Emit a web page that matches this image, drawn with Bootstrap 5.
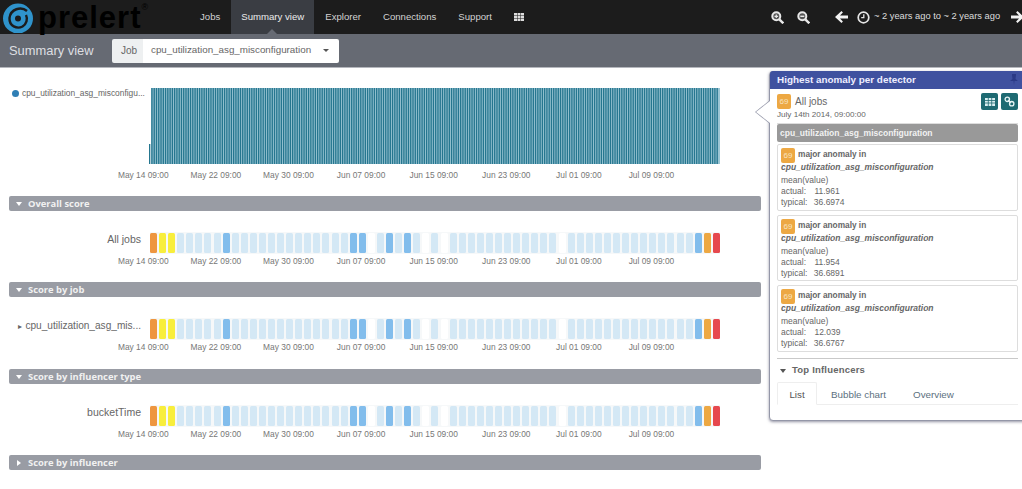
<!DOCTYPE html>
<html lang="en"><head><meta charset="utf-8"><title>Prelert Summary view</title>
<link href="https://cdn.jsdelivr.net/npm/bootstrap@5.3.0/dist/css/bootstrap.min.css" rel="stylesheet">
<style>
html,body{height:489px;overflow:hidden;background:#fff;font-family:"Liberation Sans",Arial,sans-serif;color:#666}
.topnav{height:34px;background:#1c1c1c;padding:0;flex-wrap:nowrap}
.brandbox{width:189px;height:34px;color:#fff;font-size:31px;font-weight:700;line-height:30px;padding:0 0 0 2px;margin:0;flex:none;letter-spacing:1px}
.brandbox svg{margin-right:4px;flex:none}
.brandword{margin-top:1px}
.regmark{font-size:9px;font-weight:400;align-self:flex-start;line-height:12px;margin-top:1px;letter-spacing:0}
.topnav .nav-link{font-size:9.6px;line-height:34px;padding:0 11px;color:#d2d2d2;font-weight:400}
.topnav .nav-link.active{color:#ececec;background:#3a3d43;position:relative;width:83px;padding:0;text-align:center}
.topnav .nav-link.active::after{content:"";position:absolute;left:36px;bottom:0;border:5px solid transparent;border-top:0;border-bottom-color:#666a73}
.rtools{color:#ddd;font-size:9.3px;font-weight:400;white-space:nowrap;margin-right:-2px}
.timetext{width:137px}
.icon-a{margin-right:13px}.icon-b{margin-right:25px}.icon-c{margin-right:9px}.icon-d{margin-right:4px}
.subbar{height:34px;background:#666a73;border-bottom:1px solid #b5b7bd;padding-left:9px}
.pagetitle{font-size:12.9px;color:#dedfe2;width:103px;margin:0;font-weight:400}
.jobpick{width:227px;height:24px;flex-wrap:nowrap}
.jobpick .input-group-text{font-size:10px;padding:0 0 0 9px;background:#eef0f1;border:0;color:#666;border-radius:2px 0 0 2px;width:32px}
.jobpick .btn{font-size:9.8px;padding:0 0 0 8px;background:#fff;border:0;color:#666;flex:1;text-align:left;border-radius:0 2px 2px 0;white-space:nowrap}
.jobpick .dropdown-toggle::after{margin-left:12px;vertical-align:1px;border-width:3.5px 3.5px 0;color:#555}
.mainflex{height:421px;position:relative}
.leftcol{width:769px;padding:0 8px 0 9px;flex:none}
.legendrow{height:100px;padding-top:20px}
.legendname{width:140px;font-size:8.4px;color:#666;padding:0 0 0 3px;margin-top:-1px;white-space:nowrap;flex:none}
.legenddot{display:inline-block;width:7px;height:7px;border-radius:50%;background:#2f7fb5;margin-right:3px;vertical-align:-1px}
.stripes{width:571px;height:76px;display:block;flex:none}
.ticks{display:flex;padding-left:98px;font-size:8.4px;color:#777;line-height:11px;white-space:nowrap}
.ticks span{width:72.6px;text-align:center;flex:none}
.sechead{height:15px;background:#999ca4;border-radius:2px;color:#f1f1f1;font:700 9.4px/15px "Open Sans",sans-serif;padding-left:7px;display:flex;align-items:center}
.tri{width:0;height:0;border:3.2px solid transparent;border-bottom:0;border-top:4px solid #fff;margin-right:6px;margin-left:0}
.triside{border:3.2px solid transparent;border-right:0;border-left:4px solid #fff;margin-right:7px;margin-left:1px}
.swimrow{display:flex;align-items:center;height:22px;margin-top:21px}
.swimname{width:132px;text-align:right;font-size:10.5px;color:#666;white-space:nowrap;flex:none;margin-top:-6px}
.swimname-long{font-size:10.1px}
.swimarrow{font-size:8px;margin-right:3px}
.swimcells{display:flex;gap:2.08px;margin-left:9px;background:#f6f8f9;padding:1px 0;height:22px}
.cellbox{width:7px;height:20px;border-radius:1.5px;background:#d4e8f5;flex:none}
.c-blue{background:#82bdec}.c-or{background:#ee9640}.c-am{background:#eda843}.c-ye{background:#f8ee3c}.c-re{background:#e6484e}.c-wh{background:#fff}
.tickgap{margin-top:2px;margin-bottom:15px}
.tickgap-wide{margin-bottom:16px}
.anopanel{position:absolute;left:769px;top:3px;width:262px;height:350px;border:1px solid #9497a8;border-radius:4px 0 0 4px;box-shadow:0 1px 3px rgba(60,60,90,.55);background:#fff}
.anohead{height:18px;background:#3f519f;color:#eef;font-size:9.9px;font-weight:700;line-height:18px;padding:0 0 0 7px;border-radius:3px 0 0 0;margin-top:-1px;position:relative}
.pinmark{position:absolute;right:12px;top:3px}
.pointer{position:absolute;left:-15px;top:28px;width:0;height:0;border-style:solid;border-width:12px 15px 12px 0;border-color:transparent #9497a8 transparent transparent}
.pointer::after{content:"";position:absolute;left:1px;top:-11px;width:0;height:0;border-style:solid;border-width:11px 14px 11px 0;border-color:transparent #fff transparent transparent}
.anobody{padding:4px 0 0 7px;width:248px}
.scorechip{display:inline-block;background:#eda843;color:#f7e3c2;border-radius:2px;font-size:8px;width:14px;height:15px;line-height:15px;text-align:center;padding:0;font-weight:400;flex:none}
.alltitle{font-size:10px;color:#666;margin-left:4px;line-height:15px}
.alldate{font-size:8.1px;color:#666;line-height:11px;margin-top:-1px;padding-bottom:3px;border-bottom:1px solid #ddd;height:15px}
.tealbtn{background:#1e6a72;border:0;padding:0;width:17px;height:17px;border-radius:2px;display:flex;align-items:center;justify-content:center}
.btnpair{gap:3px}
.jobstrip{background:#999;color:#f2f2f2;font-size:8.5px;font-weight:700;height:18px;line-height:18px;padding-left:3px;border-radius:2px;margin-bottom:2px}
.anocard{border:1px solid #ddd;border-radius:2px;padding:3px 3px 0;height:66.5px;margin-bottom:4px;font-size:8.5px;line-height:11px;color:#666}
.anoline1{font-weight:700;color:#666;display:flex;align-items:flex-start;gap:3px;height:15px;font-size:8.3px;line-height:13px}
.anoname{font-style:italic;font-weight:700;font-size:8.5px;line-height:11px;margin-top:-1px;margin-bottom:2px}
.valgap-a{display:inline-block;width:6px}.valgap-t{display:inline-block;width:4px}
.inflhead{border-top:1px solid #c9c9c9;margin-top:6.5px;height:24px;font-size:9.5px;font-weight:700;display:flex;align-items:center;color:#666;letter-spacing:.2px;padding-left:3px}
.inflhead .tri{border-top-color:#555;margin-right:6px}
.anotabs{--bs-nav-tabs-border-color:#eee;flex-wrap:nowrap}
.anotabs .nav-link{font-size:9.8px;color:#5c7080;padding:0;height:23px;line-height:23px;border:1px solid transparent;margin-bottom:-1px}
.anotabs .nav-link.active{color:#555;width:40px;text-align:center;border-color:#eee #eee #fff;border-radius:2px 2px 0 0}
.tab2{margin-left:13px}.tab3{margin-left:25px}
</style></head>
<body>
<nav class="navbar topnav d-flex align-items-stretch">
  <div class="navbar-brand brandbox d-flex align-items-center">
    <svg width="32" height="32" viewBox="0 0 32 32" aria-hidden="true"><circle cx="16" cy="17.500" r="15" fill="#2f93cb"/><path d="M25 10C19 5 8.500 8 7.500 17c-.5 8 7.500 11.500 13 8.500C24.500 23 26 18 24 14" fill="none" stroke="#1c1c1c" stroke-width="2.400"/><circle cx="16" cy="17.500" r="3" fill="#1c1c1c"/></svg>
    <span class="brandword">prelert</span><span class="regmark">®</span>
  </div>
  <ul class="nav flex-nowrap">
    <li class="nav-item"><a class="nav-link" href="#">Jobs</a></li>
    <li class="nav-item"><a class="nav-link active" href="#">Summary view</a></li>
    <li class="nav-item"><a class="nav-link" href="#">Explorer</a></li>
    <li class="nav-item"><a class="nav-link" href="#">Connections</a></li>
    <li class="nav-item"><a class="nav-link" href="#">Support</a></li>
    <li class="nav-item"><a class="nav-link" href="#" aria-label="Apps"><svg width="10" height="8" viewBox="0 0 10 8"><path fill="#ddd" d="M0 0h3v2.300H0zM3.500 0h3v2.300h-3zM7 0h3v2.300H7zM0 2.800h3v2.300H0zM3.500 2.800h3v2.300h-3zM7 2.800h3v2.300H7zM0 5.600h3V8H0zM3.500 5.600h3V8h-3zM7 5.600h3V8H7z"/></svg></a></li>
  </ul>
  <div class="rtools ms-auto d-flex align-items-center">
    <svg class="icon-a" width="13" height="13" viewBox="0 0 13 13"><circle cx="5.300" cy="5.300" r="4" fill="#555" stroke="#e8e8e8" stroke-width="2"/><path d="M8.300 8.300l4 4" stroke="#e8e8e8" stroke-width="2.400"/><path d="M3.500 5.300h3.600M5.300 3.500v3.600" stroke="#e8e8e8" stroke-width="1.200"/></svg>
    <svg class="icon-b" width="13" height="13" viewBox="0 0 13 13"><circle cx="5.300" cy="5.300" r="4" fill="#555" stroke="#e8e8e8" stroke-width="2"/><path d="M8.300 8.300l4 4" stroke="#e8e8e8" stroke-width="2.400"/><path d="M3.300 5.300h4" stroke="#e8e8e8" stroke-width="1.400"/></svg>
    <svg class="icon-c" width="13" height="12" viewBox="0 0 13 12"><path fill="#f2f2f2" d="M6.500 0 0 6l6.500 6 1.400-1.600L5 7.600h8V4.400H5l2.900-2.800z"/></svg>
    <svg class="icon-d" width="13" height="13" viewBox="0 0 13 13"><circle cx="6.500" cy="6.500" r="5.300" fill="none" stroke="#e4e4e4" stroke-width="1.700"/><path d="M6.800 3.200v3.500H4.200" fill="none" stroke="#e4e4e4" stroke-width="1.300"/></svg>
    <span class="timetext">~ 2 years ago to ~ 2 years ago</span>
    <svg width="13" height="12" viewBox="0 0 13 12"><path fill="#f2f2f2" d="M6.500 0 13 6l-6.500 6-1.400-1.600L8 7.600H0V4.400h8L5.100 1.600z"/></svg>
  </div>
</nav>
<div class="subbar d-flex align-items-center">
  <h1 class="pagetitle">Summary view</h1>
  <div class="input-group jobpick">
    <span class="input-group-text">Job</span>
    <button class="btn dropdown-toggle" type="button">cpu_utilization_asg_misconfiguration</button>
  </div>
</div>
<div class="mainflex d-flex">
  <div class="leftcol">
    <div class="legendrow d-flex">
      <div class="legendname"><span class="legenddot"></span>cpu_utilization_asg_misconfigu...</div>
      <svg class="stripes" id="stripes" viewBox="0 0 571 76" aria-hidden="true"></svg>
    </div>
    <div class="ticks js-ticks tickgap"></div>
    <div class="sechead"><span class="tri"></span>Overall score</div>
    <div class="swimrow"><div class="swimname">All jobs</div><div class="swimcells"></div></div>
    <div class="ticks js-ticks tickgap"></div>
    <div class="sechead"><span class="tri"></span>Score by job</div>
    <div class="swimrow"><div class="swimname swimname-long"><span class="swimarrow">&#9656;</span>cpu_utilization_asg_mis...</div><div class="swimcells"></div></div>
    <div class="ticks js-ticks tickgap tickgap-wide"></div>
    <div class="sechead"><span class="tri"></span>Score by influencer type</div>
    <div class="swimrow"><div class="swimname">bucketTime</div><div class="swimcells"></div></div>
    <div class="ticks js-ticks tickgap"></div>
    <div class="sechead"><span class="tri triside"></span>Score by influencer</div>
  </div>
  <aside class="card anopanel">
    <span class="pointer"></span>
    <div class="anohead">Highest anomaly per detector<svg class="pinmark" width="8" height="11" viewBox="0 0 8 11"><path fill="#2b3a86" d="M2 0h4v1L5.500 5 8 7H4.500L4 11 3.500 7H0l2.500-2L2 1z"/></svg></div>
    <div class="anobody">
      <div class="d-flex align-items-center justify-content-between">
        <div class="d-flex align-items-center"><span class="scorechip">69</span><span class="alltitle">All jobs</span></div>
        <div class="d-flex btnpair">
          <button class="btn tealbtn" aria-label="Table"><svg width="10" height="8" viewBox="0 0 10 8"><path fill="#d9eef0" d="M0 0h10v8H0z"/><path stroke="#1e6a72" stroke-width=".8" d="M0 2.500h10M0 5h10M3.300 0v8M6.700 0v8"/></svg></button>
          <button class="btn tealbtn" aria-label="Link"><svg width="11" height="11" viewBox="0 0 11 11"><circle cx="3.300" cy="3.300" r="2.200" fill="none" stroke="#e6f3f4" stroke-width="1.300"/><circle cx="7.700" cy="7.700" r="2.200" fill="none" stroke="#e6f3f4" stroke-width="1.300"/><path d="M4 4l3 3" stroke="#e6f3f4" stroke-width="1.300"/></svg></button>
        </div>
      </div>
      <div class="alldate">July 14th 2014, 09:00:00</div>
      <div class="jobstrip">cpu_utilization_asg_misconfiguration</div>
      <div class="anocard"><div class="anoline1"><span class="scorechip">69</span>major anomaly in</div><div class="anoname">cpu_utilization_asg_misconfiguration</div><div>mean(value)</div><div>actual: <span class="valgap-a"></span>11.961</div><div>typical: <span class="valgap-t"></span>36.6974</div></div>
      <div class="anocard"><div class="anoline1"><span class="scorechip">69</span>major anomaly in</div><div class="anoname">cpu_utilization_asg_misconfiguration</div><div>mean(value)</div><div>actual: <span class="valgap-a"></span>11.954</div><div>typical: <span class="valgap-t"></span>36.6891</div></div>
      <div class="anocard"><div class="anoline1"><span class="scorechip">69</span>major anomaly in</div><div class="anoname">cpu_utilization_asg_misconfiguration</div><div>mean(value)</div><div>actual: <span class="valgap-a"></span>12.039</div><div>typical: <span class="valgap-t"></span>36.6767</div></div>
      <div class="inflhead"><span class="tri"></span>Top Influencers</div>
      <ul class="nav nav-tabs anotabs">
        <li class="nav-item"><a class="nav-link active" href="#">List</a></li>
        <li class="nav-item tab2"><a class="nav-link" href="#">Bubble chart</a></li>
        <li class="nav-item tab3"><a class="nav-link" href="#">Overview</a></li>
      </ul>
    </div>
  </aside>
</div>
<script src="https://cdn.jsdelivr.net/npm/bootstrap@5.3.0/dist/js/bootstrap.bundle.min.js"></script>
<script>
var special={0:'c-or',1:'c-ye',2:'c-ye',8:'c-blue',22:'c-blue',23:'c-blue',24:'c-wh',26:'c-blue',28:'c-blue',30:'c-wh',32:'c-wh',45:'c-wh',60:'c-blue',61:'c-am',62:'c-re'};
document.querySelectorAll('.swimcells').forEach(function(box){
  for(var i=0;i<63;i++){var d=document.createElement('div');d.className='cellbox '+(special[i]||'');box.appendChild(d);}
});
var labels=['May 14 09:00','May 22 09:00','May 30 09:00','Jun 07 09:00','Jun 15 09:00','Jun 23 09:00','Jul 01 09:00','Jul 09 09:00'];
document.querySelectorAll('.js-ticks').forEach(function(row){
  labels.forEach(function(t){var s=document.createElement('span');s.textContent=t;row.appendChild(s);});
});
var svg=document.getElementById('stripes'),parts='<rect x="2" y="0" width="569" height="76" fill="#9cc6d4"/>';
for(var b=0;b<251;b++){var y=b?0:56;parts+='<rect x="'+(b*2.27).toFixed(2)+'" y="'+y+'" width="1.35" height="'+(76-y)+'" fill="#25768f"/>';}
svg.innerHTML=parts;
</script>
</body></html>
